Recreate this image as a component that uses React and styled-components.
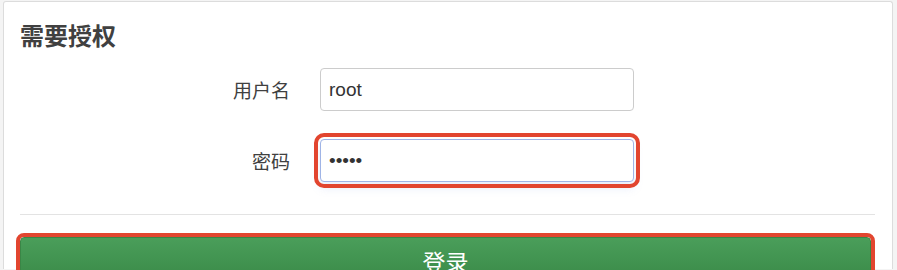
import React from 'react';
import styled, { createGlobalStyle } from 'styled-components';

const GlobalStyle = createGlobalStyle`
    html, body {
        margin: 0;
        padding: 0;
        background: #f4f4f4;
        font-family: "Liberation Sans", "Noto Sans CJK SC", sans-serif;
        color: #404040;
    }
`

const Page = styled.div`
    padding: 1px 4px 0 3px;
    height: 269px;
    overflow: hidden;
`

const Panel = styled.div`
    background: #fff;
    border: 1px solid #dcdcdc;
    border-bottom: none;
    border-radius: 3px 3px 0 0;
    padding: 19px 17px 0 16px;
    height: 268px;
    box-sizing: border-box;
`

const Title = styled.h2`
    margin: 0 0 15px 0;
    font-size: 24px;
    line-height: 32px;
    font-weight: bold;
    color: #404040;
`

const Row = styled.div`
    display: grid;
    grid-template-columns: 270px 314px;
    column-gap: 30px;
    align-items: center;
    margin-bottom: ${props => props.gap ? props.gap : 0}px;
`

const Label = styled.label`
    text-align: right;
    font-size: 19px;
    color: #404040;
`

const Input = styled.input`
    box-sizing: border-box;
    width: 314px;
    height: 43px;
    padding: 0 8px;
    font-size: 19px;
    font-family: "Liberation Sans", sans-serif;
    color: #333;
    border: 1px solid ${props => props.focused ? '#9fb4e6' : '#cccccc'};
    border-radius: 4px;
    background: #fff;
    outline: ${props => props.focused ? '4px solid #e2452f' : 'none'};
    outline-offset: 2px;
    box-shadow: ${props => props.focused ? '0 6px 10px rgba(120,150,230,0.18)' : 'none'};
`

const Divider = styled.hr`
    margin: 32px 0 22px 0;
    border: none;
    border-top: 1px solid #e3e3e3;
`

const LoginButton = styled.button`
    display: block;
    width: calc(100% - 4px);
    height: 44px;
    border: 1px solid #3a8646;
    border-radius: 4px;
    background: linear-gradient(#4a9e5a, #3a8a48);
    color: #fff;
    font-size: 23px;
    font-family: "Liberation Sans", "Noto Sans CJK SC", sans-serif;
    padding: 3px 0 0 0;
    outline: 4px solid #e2452f;
    outline-offset: 0px;
`

export default function App() {
    return (
        <Page>
            <GlobalStyle />
            <Panel>
                <Title>需要授权</Title>
                <Row gap={28}>
                    <Label>用户名</Label>
                    <Input type="text" defaultValue="root" />
                </Row>
                <Row>
                    <Label>密码</Label>
                    <Input type="password" defaultValue="admin" focused />
                </Row>
                <Divider />
                <LoginButton>登录</LoginButton>
            </Panel>
        </Page>
    );
}
